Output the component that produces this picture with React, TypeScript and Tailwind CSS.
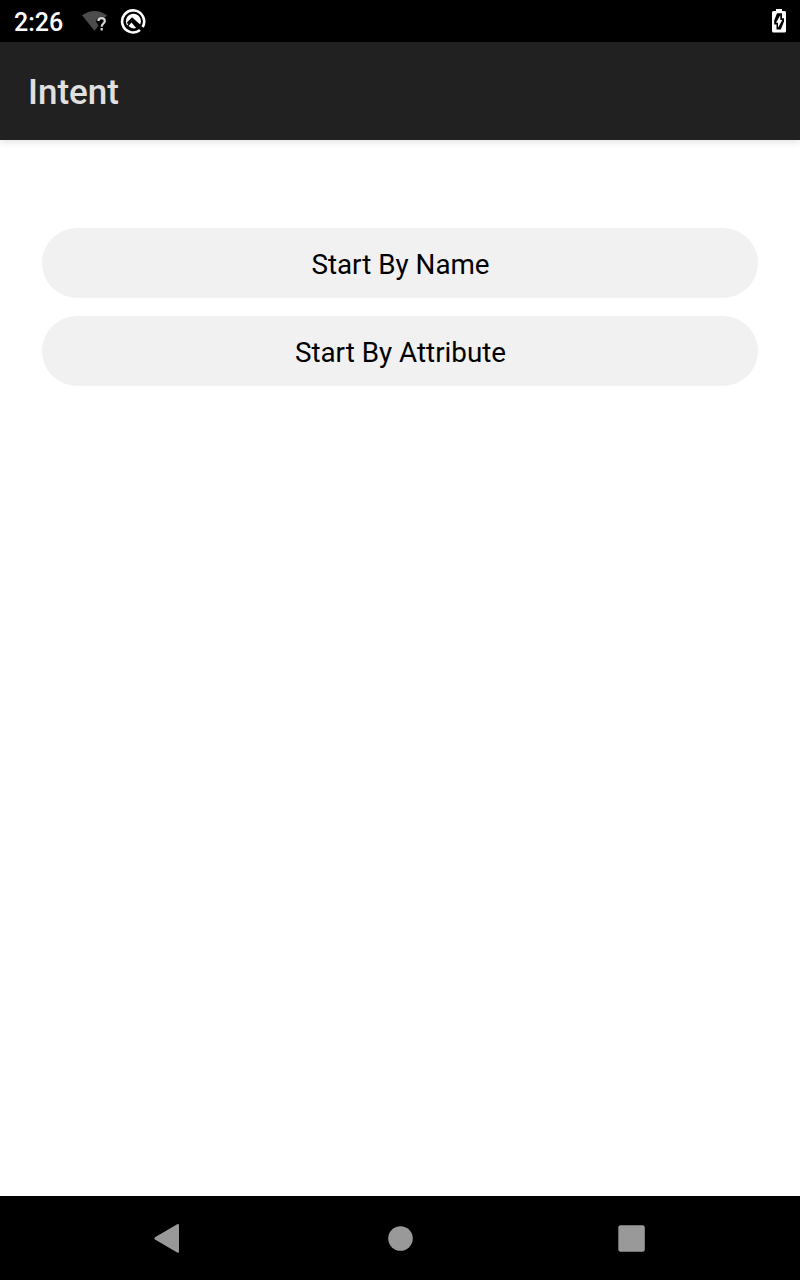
export default function App() {
  return (
    <div className="flex h-[1280px] w-[800px] flex-col bg-white font-['Roboto',sans-serif]">
      <div className="flex h-[42px] shrink-0 items-center bg-black pr-[14px] pl-[14px] text-white">
        <span className="w-[68px] pt-[4px] text-[25px] leading-[30px] font-medium">2:26</span>
        <svg width="26" height="24" viewBox="82 9 26 24">
          <path d="M82 15.300Q94.500 6.500 107 15.300L105.500 17.300Q97.500 15 96 21.500L98.500 25.500L94.500 30.700Z" fill="#4c4c4c" />
          <path d="M98.400 21C98.400 17.300 104.800 17.300 104.800 21C104.800 23.500 101.700 23.500 101.700 26.700M101.700 28V30.500" fill="none" stroke="#d8d8d8" strokeWidth="2.200" />
        </svg>
        <svg className="ml-[12px]" width="28" height="28" viewBox="120 7 28 28">
          <path d="M140 30A11 11 0 1 1 142.600 27" fill="none" stroke="#fff" strokeWidth="2.600" />
          <path d="M127.200 25.500A7.500 7.500 0 1 1 140.200 24.500L133 18.200Z" fill="#fff" />
          <path d="M127.500 23.500L132 18.800L142.500 30.500" fill="none" stroke="#000" strokeWidth="2" />
          <path d="M128.500 26L131.500 22.500L136.200 28Q132 29.500 128.500 26Z" fill="#fff" />
        </svg>
        <svg className="ml-auto" width="14" height="24" viewBox="0 0 14 24">
          <path d="M4 0H10V2H12.500Q14 2 14 3.500V22Q14 23.500 12.500 23.500H1.500Q0 23.500 0 22V3.500Q0 2 1.500 2H4Z" fill="#fff" />
          <path d="M5 4.300H10V9.300H12V12.500L8.800 20.500H4.500V15.500H2.200V11.500Z" fill="#000" />
          <path d="M8.300 6.300V11H10.300L6 18.700V13.800H4Z" fill="#fff" />
        </svg>
      </div>
      <header className="z-10 flex h-[98px] shrink-0 items-center bg-[#212121] pt-[5px] pl-[28px] text-[35px] font-medium text-[#e0e0e0] shadow-[0_2px_7px_rgba(0,0,0,0.12)]">Intent</header>
      <main className="flex flex-1 flex-col gap-[18px] px-[42px] pt-[88px]">
        <button className="h-[70px] rounded-full bg-[#f1f1f1] pt-[3px] pl-px text-[27.8px] text-black">Start By Name</button>
        <button className="h-[70px] rounded-full bg-[#f1f1f1] pt-[3px] pl-px text-[27.8px] text-black">Start By Attribute</button>
      </main>
      <nav className="h-[84px] shrink-0 bg-black">
        <svg width="800" height="84" viewBox="0 1196 800 84" fill="#999">
          <path d="M155 1237.200L177.200 1224.300Q179 1223.500 179 1225.500V1251.500Q179 1253.300 177.200 1252.500L155 1239.600Q153.500 1238.400 155 1237.200Z" />
          <circle cx="400.500" cy="1238.500" r="12.300" />
          <rect x="618.300" y="1225.200" width="26.500" height="26.500" rx="2.200" />
        </svg>
      </nav>
    </div>
  );
}
